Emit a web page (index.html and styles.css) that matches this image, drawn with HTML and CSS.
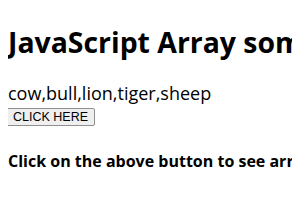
FILE: index.html
```html
<!DOCTYPE html>
<html>
<head>
<meta charset="utf-8">
<link rel="stylesheet" href="styles.css">
</head>
<body>
<h1 class="title">JavaScript Array some() Method</h1>
<div class="list">cow,bull,lion,tiger,sheep</div>
<button class="btn">CLICK HERE</button>
<p class="note">Click on the above button to see array elements</p>
</body>
</html>
```
FILE: styles.css
```css
body {
  margin: 8px;
  font-family: "Open Sans", sans-serif;
  color: #000;
  background: #fff;
  white-space: nowrap;
  overflow: hidden;
}
.title {
  font-size: 28.4px;
  line-height: 38px;
  font-weight: 700;
  margin: 15px 0 20px;
}
.list {
  font-size: 18px;
  line-height: 24px;
}
.btn {
  display: block;
  margin: 3px 0 0 -2px;
  font-family: "Liberation Sans", Arial, sans-serif;
  font-size: 12.5px;
  line-height: 16px;
  padding: 0 6px;
  border: 1px solid #8f8f8f;
  border-radius: 2px;
  background: #efefef;
  color: #000;
}
.note {
  font-size: 16px;
  line-height: 22px;
  font-weight: 700;
  margin: 24px 0 18px;
}
```
